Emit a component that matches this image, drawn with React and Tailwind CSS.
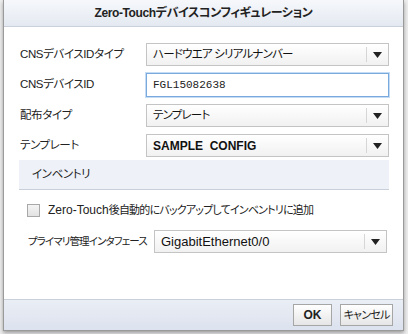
const jp = "font-['Liberation_Sans','Noto_Sans_CJK_JP',sans-serif] [font-feature-settings:'palt']";

const Arrow = () => (
  <svg width="9" height="6" viewBox="0 0 9 6">
    <path d="M0 0h9L4.5 6z" fill="#222" />
  </svg>
);

const Select = ({ value, textClass = "", className = "" }) => (
  <div
    className={`flex h-[23px] items-stretch border border-[#c4c4c4] bg-gradient-to-b from-white to-[#f1f1f1] ${className}`}
  >
    <div
      className={`flex flex-1 items-center whitespace-pre pl-[6px] text-[#111] ${textClass}`}
    >
      {value}
    </div>
    <div className="my-[3px] w-px bg-[#d6d6d6]" />
    <div className="flex w-[21px] items-center justify-center">
      <Arrow />
    </div>
  </div>
);

const labelCls = "whitespace-nowrap text-[11.5px] tracking-[-0.4px] text-[#222]";
const jpSel = "text-[11.5px] tracking-[-0.8px]";

const Row = ({ label, children }) => (
  <div className="flex items-center">
    <div className={`w-[126px] ${labelCls}`}>{label}</div>
    <div className="w-[243px]">{children}</div>
  </div>
);

export default function App() {
  return (
    <div className={`h-[334px] w-[408px] overflow-hidden bg-[#eeeeee] ${jp}`}>
      <div className="ml-[3px] flex h-[331px] w-[401px] flex-col border border-t-0 border-[#9a9a9a] bg-white shadow-[0_2px_4px_rgba(0,0,0,0.35)]">
        {/* title */}
        <div className="flex h-[27px] items-center justify-center whitespace-nowrap border-b border-[#c9d0da] bg-gradient-to-b from-[#f6f8fb] to-[#e4e9f1] text-[12px] font-bold tracking-[-0.4px] text-[#222]">
          Zero-Touchデバイスコンフィギュレーション
        </div>

        <div className="flex flex-col gap-[7px] pl-[16px] pt-[16px]">
          <Row label="CNSデバイスIDタイプ">
            <Select value="ハードウエア シリアルナンバー" textClass={jpSel} />
          </Row>
          <Row label="CNSデバイスID">
            <div className="flex h-[24px] items-center border border-[#7aa9de] pl-[6px] font-['Liberation_Mono',monospace] text-[11px] text-[#222] ring-1 ring-[#c5dcf5]">
              FGL15082638
            </div>
          </Row>
          <Row label="配布タイプ">
            <Select value="テンプレート" textClass={jpSel} />
          </Row>
          <Row label="テンプレート">
            <Select value="SAMPLE  CONFIG" textClass="text-[12px] font-bold" />
          </Row>
        </div>

        {/* inventory */}
        <div className={`ml-[15px] mr-[14px] mt-[3px] flex h-[30px] items-center border-b border-[#c9d0da] bg-[#eef1f8] pl-[13px] ${labelCls}`}>
          インベントリ
        </div>

        <div className="ml-[23px] mt-[11px] flex items-center gap-[8px] whitespace-nowrap text-[12px] text-[#222]">
          <div className="h-[13px] w-[13px] border border-[#a8a8a8] bg-gradient-to-b from-[#f4f4f4] to-[#e2e2e2]" />
          <span>
            Zero-Touch
            <span className="text-[11px] tracking-[-0.8px]">後自動的にバックアップしてインベントリに追加</span>
          </span>
        </div>

        <div className="ml-[24px] mt-[11px] flex items-center">
          <div className="w-[126px] whitespace-nowrap text-[10.5px] tracking-[-0.9px] text-[#222]">
            プライマリ管理インタフェース
          </div>
          <Select value="GigabitEthernet0/0" textClass="text-[13px]" className="w-[233px]" />
        </div>

        <div className="flex-1" />

        {/* footer */}
        <div className="flex h-[31px] items-center justify-end gap-[8px] border-t border-[#c9d0da] bg-gradient-to-b from-[#eaeef5] to-[#dce2ee] pr-[10px]">
          <button className="h-[22px] w-[39px] border border-[#a6a6a6] bg-gradient-to-b from-white to-[#e6e6e6] text-[12px] font-bold text-[#222]">
            OK
          </button>
          <button className="h-[22px] w-[53px] whitespace-nowrap border border-[#a6a6a6] bg-gradient-to-b from-white to-[#e6e6e6] px-0 text-[11px] tracking-[-0.8px] text-[#222]">
            キャンセル
          </button>
        </div>
      </div>
    </div>
  );
}
